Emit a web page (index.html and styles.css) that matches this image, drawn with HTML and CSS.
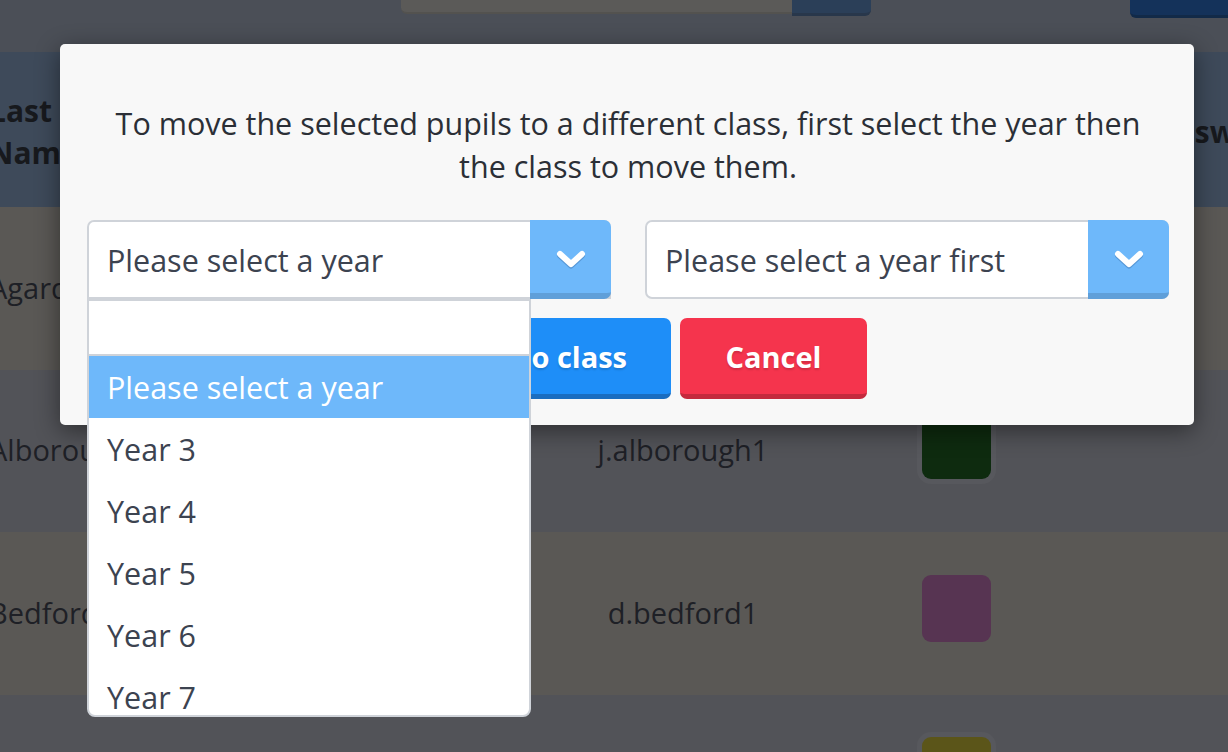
FILE: index.html
```html
<!DOCTYPE html>
<html>
<head>
<meta charset="utf-8">
<link rel="stylesheet" href="styles.css">
</head>
<body>
<div class="page">
  <div class="toolbar">
    <div class="search">
      <div class="search-input"></div>
      <div class="search-btn"></div>
    </div>
    <div class="top-btn"></div>
  </div>
  <div class="table">
    <div class="row head">
      <div class="cell name">Last<br>Name</div>
      <div class="cell user"></div>
      <div class="cell colour"></div>
      <div class="cell pass">Password</div>
    </div>
    <div class="row odd">
      <div class="cell name">Agard</div>
      <div class="cell user">a.agard1</div>
      <div class="cell colour"><span class="swatch" style="background:#5a3a1e"></span></div>
      <div class="cell pass"></div>
    </div>
    <div class="row even">
      <div class="cell name">Alborough</div>
      <div class="cell user">j.alborough1</div>
      <div class="cell colour"><span class="swatch ring" style="background:#0e2b0f"></span></div>
      <div class="cell pass"></div>
    </div>
    <div class="row odd">
      <div class="cell name">Bedford</div>
      <div class="cell user">d.bedford1</div>
      <div class="cell colour"><span class="swatch" style="background:#573452"></span></div>
      <div class="cell pass"></div>
    </div>
    <div class="row even">
      <div class="cell name">Bell</div>
      <div class="cell user">s.bell1</div>
      <div class="cell colour"><span class="swatch ring" style="background:#5b5519"></span></div>
      <div class="cell pass"></div>
    </div>
  </div>

  <div class="modal">
    <p class="modal-text">To move the selected pupils to a different class, first select the year then<br>the class to move them.</p>
    <div class="selects">
      <div class="select open">
        <span class="select-value">Please select a year</span>
        <span class="select-arrow"><svg width="30" height="20" viewBox="0 0 30 20"><polyline points="4,5 15,15 26,5" fill="none" stroke="rgba(40,90,150,0.35)" stroke-width="6" stroke-linecap="round" stroke-linejoin="round" transform="translate(0,1.5)"/><polyline points="4,5 15,15 26,5" fill="none" stroke="#fff" stroke-width="6" stroke-linecap="round" stroke-linejoin="round"/></svg></span>
        <div class="dropdown">
          <div class="dropdown-search"></div>
          <div class="option active">Please select a year</div>
          <div class="option">Year 3</div>
          <div class="option">Year 4</div>
          <div class="option">Year 5</div>
          <div class="option">Year 6</div>
          <div class="option">Year 7</div>
        </div>
      </div>
      <div class="select">
        <span class="select-value">Please select a year first</span>
        <span class="select-arrow"><svg width="30" height="20" viewBox="0 0 30 20"><polyline points="4,5 15,15 26,5" fill="none" stroke="rgba(40,90,150,0.35)" stroke-width="6" stroke-linecap="round" stroke-linejoin="round" transform="translate(0,1.5)"/><polyline points="4,5 15,15 26,5" fill="none" stroke="#fff" stroke-width="6" stroke-linecap="round" stroke-linejoin="round"/></svg></span>
      </div>
    </div>
    <div class="actions">
      <button class="btn btn-blue">Move to class</button>
      <button class="btn btn-red">Cancel</button>
    </div>
  </div>
</div>
</body>
</html>
```

FILE: styles.css
```css
* { box-sizing: border-box; }
html, body { margin: 0; padding: 0; }
body {
  font-family: "Open Sans", "Noto Sans", sans-serif;
  width: 1228px;
  height: 752px;
  overflow: hidden;
}
.page {
  position: relative;
  width: 1228px;
  height: 752px;
  background: #4b4f57;
  overflow: hidden;
}
.toolbar {
  height: 52px;
  display: flex;
  align-items: flex-start;
}
.search {
  display: flex;
  margin-left: 401px;
}
.search-input {
  width: 391px;
  height: 14px;
  background: #5b5a58;
  border-bottom: 2px solid #53524f;
  border-radius: 0 0 0 6px;
}
.search-btn {
  width: 79px;
  height: 16px;
  background: #2b3f58;
  border-bottom: 3px solid #28374b;
  border-radius: 0 0 6px 0;
}
.top-btn {
  margin-left: 259px;
  width: 110px;
  height: 18px;
  background: #14325a;
  border-bottom: 3px solid #122a48;
  border-radius: 0 0 0 6px;
}
.table { display: flex; flex-direction: column; }
.row {
  display: grid;
  grid-template-columns: 564px 244px 303px 1fr;
  margin-left: -3px;
  align-items: center;
  color: #1e2026;
  font-size: 29px;
  line-height: 42px;
}
.cell.name { margin-left: -8px; }
.row.head {
  height: 155px;
  background: #3e4a5a;
  font-weight: 700;
  font-size: 30px;
  color: #17191d;
  padding-top: 4px;
}
.row.odd { height: 163px; background: #5a5855; padding-bottom: 2px; }
.row.even { height: 162px; background: #525358; padding-bottom: 2px; }
.cell.user { text-align: center; }
.cell.colour { display: flex; justify-content: center; }
.cell.pass { padding-left: 35px; }
.swatch {
  display: block;
  width: 69px;
  height: 67px;
  border-radius: 9px;
  margin-bottom: 9px;
}
.swatch.ring { box-shadow: 0 0 0 5px rgba(255,255,255,0.03); }

.modal {
  position: absolute;
  left: 60px;
  top: 44px;
  width: 1134px;
  height: 381px;
  background: #f8f8f8;
  border-radius: 5px;
  box-shadow: 0 6px 24px rgba(0,0,0,0.45);
  padding: 58px 25px 26px 27px;
}
.modal-text {
  margin: 0;
  text-align: center;
  font-size: 30.5px;
  line-height: 43px;
  color: #2b2f36;
}
.selects {
  margin-top: 32px;
  display: grid;
  grid-template-columns: 524px 524px;
  column-gap: 34px;
}
.select {
  position: relative;
  height: 79px;
  background: #fff;
  border: 2px solid #cfd3d9;
  border-radius: 7px;
  display: flex;
  align-items: center;
}
.select.open { border-radius: 7px 7px 0 0; }
.select-value {
  flex: 1;
  padding-left: 18px;
  font-size: 30.5px;
  color: #3c4350;
}
.select-arrow {
  align-self: stretch;
  width: 81px;
  margin: -2px -2px -2px 0;
  background: #6eb8fa;
  border-bottom: 6px solid #5f9fd9;
  border-radius: 0 7px 7px 0;
  display: flex;
  align-items: center;
  justify-content: center;
  padding-top: 4px;
}
.dropdown {
  position: absolute;
  left: -2px;
  top: 77px;
  width: 444px;
  height: 418px;
  background: #fff;
  border: 2px solid #cfd3d9;
  border-radius: 0 0 8px 8px;
  overflow: hidden;
  z-index: 2;
}
.dropdown-search {
  height: 55px;
  border-bottom: 2px solid #cfd3d9;
}
.option {
  height: 62px;
  line-height: 62px;
  padding-left: 18px;
  font-size: 30.5px;
  color: #3c4350;
}
.option.active {
  background: #6eb8fa;
  color: #fff;
}
.actions {
  margin-top: 19px;
  display: flex;
  justify-content: flex-end;
  gap: 9px;
  padding-right: 302px;
}
.btn {
  height: 81px;
  border: none;
  border-radius: 7px;
  font-family: "Open Sans", "Noto Sans", sans-serif;
  font-weight: 700;
  font-size: 29px;
  color: #fff;
  text-shadow: 0 2px 2px rgba(0,0,0,0.15);
  padding: 0 44px;
}
.btn-blue {
  background: #1e8ef8;
  border-bottom: 5px solid #1a6dc0;
}
.btn-red {
  background: #f5344d;
  border-bottom: 5px solid #c42a3d;
  width: 187px;
  padding: 0;
}
```
